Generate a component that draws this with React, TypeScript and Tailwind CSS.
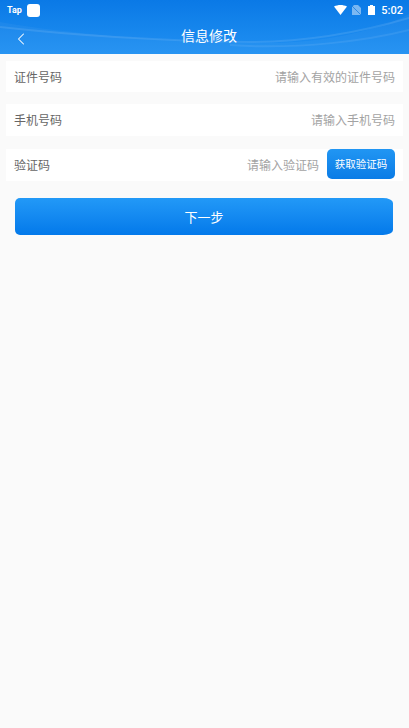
import { ChevronLeft } from "lucide-react";

const font = { fontFamily: '"Noto Sans CJK SC", "Noto Sans", sans-serif' };

const Row = ({ label, hint, className }: { label: string; hint: string; className: string }) => (
  <div className={`flex items-center justify-between bg-white pl-2 pr-2 ${className}`}>
    <span className="text-[12px] text-[#666]">{label}</span>
    <span className="text-[12px] text-[#a3a3a3]">{hint}</span>
  </div>
);

export default function App() {
  return (
    <div className="flex h-[728px] w-[409px] flex-col overflow-hidden bg-[#fafafa]" style={font}>
      <header className="relative h-[54px] shrink-0 overflow-hidden bg-gradient-to-b from-[#0a79e6] via-[#1585ec] to-[#2090f2]">
        <svg className="absolute inset-0" width="409" height="54" viewBox="0 0 409 54" fill="none">
          <path d="M0 22 C70 34 150 40 250 43 C320 45 380 30 409 14 L409 54 L0 54 Z" fill="#ffffff" fillOpacity="0.04" />
          <path d="M0 27 C80 36 170 41 250 42 C320 42 375 28 409 18" stroke="#ffffff" strokeOpacity="0.1" strokeWidth="2" />
          <path d="M230 45 C300 50 370 40 409 30" stroke="#ffffff" strokeOpacity="0.08" strokeWidth="2" />
        </svg>
        <div className="relative flex h-5 items-center justify-between pl-[7px] pr-[6px]">
          <div className="flex items-center gap-[5px]">
            <span className="text-[9px] font-bold leading-none text-white" style={{ fontFamily: '"Roboto", sans-serif' }}>Tap</span>
            <span className="h-[13px] w-[13px] rounded-[3px] bg-white" />
          </div>
          <div className="flex items-center">
            <svg width="13" height="10" viewBox="0 0 13 10"><path d="M0 1.5 C4 -0.5 9 -0.5 13 1.5 L6.5 10 Z" fill="#fff" /></svg>
            <svg className="ml-[5px]" width="9" height="10" viewBox="0 0 9 10"><path d="M2 0 H6 L9 3 V10 H0 V2 Z" fill="#ffffff" fillOpacity="0.45" /><path d="M0 1 L9 10" stroke="#1a7fe0" strokeWidth="0.8" /></svg>
            <svg className="ml-[7px]" width="7" height="10" viewBox="0 0 7 10"><path d="M2 0 H5 V1 H7 V10 H0 V1 H2 Z" fill="#fff" /></svg>
            <span className="ml-[6px] text-[11px] font-medium leading-none text-white" style={{ fontFamily: '"Roboto", sans-serif' }}>5:02</span>
          </div>
        </div>
        <div className="relative flex h-[31px] items-center justify-center">
          <ChevronLeft className="absolute left-[11px] top-[9px] h-[20px] w-[20px] text-white" strokeWidth={1.25} />
          <span className="ml-[9px] text-[14px] text-white">信息修改</span>
        </div>
      </header>

      <main className="flex flex-col px-[6px]">
        <Row label="证件号码" hint="请输入有效的证件号码" className="mt-[7px] h-[31px]" />
        <Row label="手机号码" hint="请输入手机号码" className="mt-[12px] h-8" />
        <div className="mt-[13px] flex h-8 items-center bg-white pl-2 pr-2">
          <span className="text-[12px] text-[#666]">验证码</span>
          <span className="ml-auto text-[12px] text-[#a3a3a3]">请输入验证码</span>
          <button className="mb-[2px] ml-2 h-[30px] w-[68px] rounded-[5px] bg-gradient-to-b from-[#2196f3] to-[#0a7ce6] text-[10.5px] text-white">获取验证码</button>
        </div>
        <button className="mx-[9px] mt-[17px] h-[37px] w-[378px] rounded-l-[5px] rounded-tr-[10px_5px] rounded-br-[10px_5px] bg-gradient-to-b from-[#2299f7] to-[#0379ea] text-[13px] text-white">下一步</button>
      </main>
    </div>
  );
}
